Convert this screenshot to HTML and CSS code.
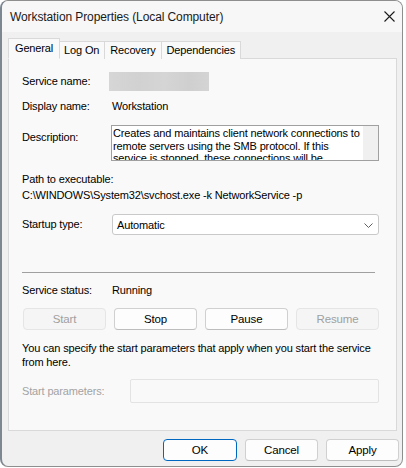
FILE: index.html
```html
<!DOCTYPE html>
<html>
<head>
<meta charset="utf-8">
<title>Workstation Properties</title>
<link rel="stylesheet" href="styles.css">
</head>
<body>
<div class="window">
  <div class="titlebar">
    <span class="title">Workstation Properties (Local Computer)</span>
    <svg class="close" width="11" height="11" viewBox="0 0 11 11"><path d="M0.5 0.5 L10.5 10.5 M10.5 0.5 L0.5 10.5" stroke="#1b1b1b" stroke-width="1.1" fill="none"/></svg>
  </div>
  <div class="content">
    <div class="tabs">
      <div class="tab active">General</div>
      <div class="tab">Log On</div>
      <div class="tab">Recovery</div>
      <div class="tab">Dependencies</div>
    </div>
    <div class="panel">
      <div class="row r-service">
        <span class="label">Service name:</span>
        <span class="blurred"></span>
      </div>
      <div class="row r-display">
        <span class="label">Display name:</span>
        <span class="value">Workstation</span>
      </div>
      <div class="row r-desc">
        <span class="label desc-label">Description:</span>
        <div class="descbox">
          <div class="desctext">Creates and maintains client network connections to<br>remote servers using the SMB protocol. If this<br>service is stopped, these connections will be<br>unavailable.</div>
          <div class="scroll"></div>
        </div>
      </div>
      <div class="path-label">Path to executable:</div>
      <div class="path-value">C:\WINDOWS\System32\svchost.exe -k NetworkService -p</div>
      <div class="row r-startup">
        <span class="label">Startup type:</span>
        <div class="combo">
          <span>Automatic</span>
          <svg width="9" height="5" viewBox="0 0 9 5"><path d="M0.5 0.5 L4.5 4.5 L8.5 0.5" stroke="#5f5f5f" stroke-width="1" fill="none"/></svg>
        </div>
      </div>
      <div class="sep"></div>
      <div class="row r-status">
        <span class="label">Service status:</span>
        <span class="value">Running</span>
      </div>
      <div class="svc-buttons">
        <button class="btn disabled">Start</button>
        <button class="btn">Stop</button>
        <button class="btn">Pause</button>
        <button class="btn disabled">Resume</button>
      </div>
      <p class="info">You can specify the start parameters that apply when you start the service<br>from here.</p>
      <div class="row r-params">
        <span class="label dim">Start parameters:</span>
        <div class="param-input"></div>
      </div>
    </div>
    <div class="footer">
      <button class="btn fbtn primary">OK</button>
      <button class="btn fbtn">Cancel</button>
      <button class="btn fbtn">Apply</button>
    </div>
  </div>
</div>
</body>
</html>
```
FILE: styles.css
```css
html, body {
  margin: 0;
  padding: 0;
  background: #ffffff;
}
body {
  font-family: "Liberation Sans", Arial, sans-serif;
  font-size: 11px;
  letter-spacing: -0.15px;
  color: #000;
}
.window {
  box-sizing: border-box;
  width: 403px;
  height: 467px;
  background: #f0f0f0;
  border: 1px solid #8e8e8e;
  border-left: 2px solid #7d8792;
  border-radius: 8px;
  overflow: hidden;
}
.titlebar {
  height: 31px;
  background: #f7f7f7;
  display: flex;
  align-items: center;
  justify-content: space-between;
  padding: 0 7px 0 8px;
}
.title {
  font-size: 12px;
  letter-spacing: -0.1px;
  color: #1a1a1a;
}
.close {
  margin-top: -1px;
}
.content {
  padding: 6px 5px 0 6px;
}
.tabs {
  display: flex;
  align-items: flex-end;
  height: 21px;
  position: relative;
  z-index: 1;
  margin-bottom: -1px;
}
.tab {
  box-sizing: border-box;
  height: 18px;
  line-height: 17px;
  padding: 0 5px;
  background: #f9f9f9;
  border: 1px solid #d9d9d9;
  border-bottom: none;
  margin-left: -1px;
}
.tab:first-child {
  margin-left: 0;
}
.tab.active {
  height: 21px;
  line-height: 18px;
  padding: 0 6px;
  border-bottom: 1px solid #f9f9f9;
  position: relative;
  z-index: 2;
  margin-right: -1px;
}
.panel {
  box-sizing: border-box;
  height: 373px;
  background: #f9f9f9;
  border: 1px solid #d9d9d9;
  padding: 13px 17px 0 13px;
}
.row {
  display: flex;
  align-items: center;
}
.label {
  width: 90px;
  flex: none;
  line-height: 13px;
}
.value {
  line-height: 13px;
}
.dim {
  color: #a3a3a3;
}
.r-service {
  height: 19px;
}
.blurred {
  width: 100px;
  height: 19px;
  margin-left: -3px;
  background: linear-gradient(90deg, #d6d6d6 0%, #d1d1d1 30%, #d5d5d5 55%, #cfcfcf 80%, #d4d4d4 100%);
}
.r-display {
  height: 19px;
  margin-top: 6px;
}
.r-desc {
  align-items: flex-start;
  margin-top: 9px;
}
.desc-label {
  margin-top: 6px;
}
.descbox {
  box-sizing: border-box;
  width: 268px;
  height: 36px;
  margin-left: -1px;
  border: 1px solid #a0a0a0;
  background: #fff;
  display: flex;
  overflow: hidden;
}
.desctext {
  flex: 1;
  padding: 1px 0 0 1px;
  line-height: 12.5px;
  white-space: nowrap;
  overflow: hidden;
}
.scroll {
  width: 15px;
  flex: none;
  background: #f0f0f0;
  border-left: 1px solid #fff;
}
.path-label {
  margin-top: 12px;
  line-height: 13px;
}
.path-value {
  margin-top: 3px;
  line-height: 13px;
}
.r-startup {
  margin-top: 12px;
}
.combo {
  box-sizing: border-box;
  width: 267px;
  height: 21px;
  background: #fff;
  border: 1px solid #c9c9c9;
  border-radius: 3px;
  display: flex;
  align-items: center;
  justify-content: space-between;
  padding: 0 5px 0 4px;
}
.combo svg {
  margin-top: 1px;
}
.sep {
  height: 1px;
  background: #a0a0a0;
  margin: 37px 4px 0 0;
}
.r-status {
  margin-top: 11px;
}
.svc-buttons {
  display: grid;
  grid-template-columns: repeat(4, 1fr);
  gap: 8px;
  margin-top: 11px;
  padding-left: 1px;
}
.btn {
  box-sizing: border-box;
  height: 22px;
  font-family: "Liberation Sans", Arial, sans-serif;
  font-size: 11.5px;
  letter-spacing: -0.15px;
  color: #000;
  background: #fdfdfd;
  border: 1px solid #d0d0d0;
  border-bottom-color: #bdbdbd;
  border-radius: 4px;
  padding: 0;
  margin: 0;
}
.btn.disabled {
  background: #f5f5f5;
  border-color: #e5e5e5;
  color: #a0a0a0;
}
.info {
  margin: 11px 0 0 0;
  line-height: 14px;
}
.r-params {
  margin-top: 10px;
}
.label.dim {
  width: 108px;
}
.param-input {
  box-sizing: border-box;
  width: 250px;
  height: 24px;
  background: #f9f9f9;
  border: 1px solid #e3e3e3;
  border-radius: 2px;
}
.footer {
  display: flex;
  justify-content: flex-end;
  gap: 8px;
  margin: 8px -2px 0 0;
}
.fbtn {
  width: 73px;
}
.fbtn.primary {
  width: 74px;
  border: 1px solid #0067c0;
}
```
